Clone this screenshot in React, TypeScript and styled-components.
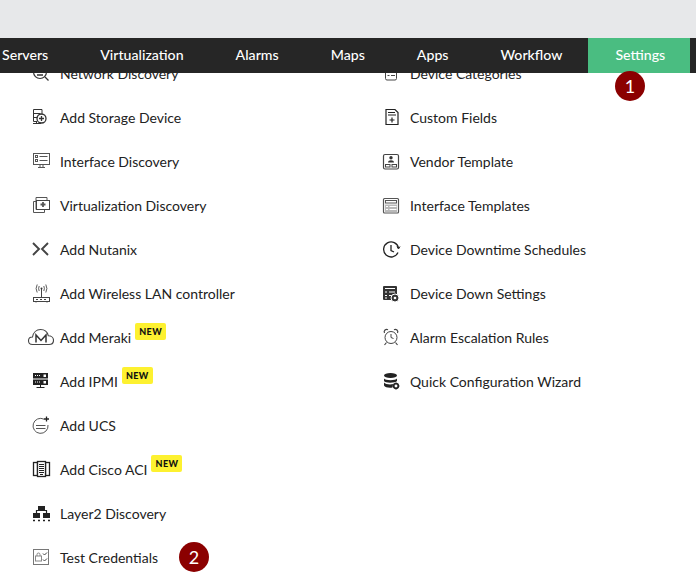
import React from "react";
import styled, { createGlobalStyle } from "styled-components";

const GlobalStyle = createGlobalStyle`
  html, body {
    margin: 0;
    padding: 0;
    background: #fff;
  }
  body {
    font-family: Lato, "Liberation Sans", sans-serif;
    font-size: 14px;
    color: #222;
  }
`;

const Page = styled.div`
  position: relative;
  width: 696px;
  height: 576px;
  overflow: hidden;
`;

const TopBand = styled.div`
  height: 38px;
  background: #e7e8ea;
`;

const NavBar = styled.nav`
  display: flex;
  position: relative;
  z-index: 1;
  height: 35px;
  background: #262626;
  overflow: hidden;
`;

const NavItem = styled.a<{ $active?: boolean; $first?: boolean }>`
  display: flex;
  align-items: center;
  flex: none;
  padding: 0 ${(p) => (p.$active ? "25px" : "26px")} 2px ${(p) => (p.$active ? "27px" : "26px")};
  margin-left: ${(p) => (p.$first ? "-24px" : "0")};
  background: ${(p) => (p.$active ? "#4abd81" : "transparent")};
  color: #fff;
  font-size: 14.15px;
  font-weight: 500;
  white-space: nowrap;
`;

const Content = styled.div`
  display: grid;
  grid-template-columns: 350px 1fr;
  padding-left: 20px;
  margin-top: -22px;
`;

const Column = styled.ul`
  list-style: none;
  margin: 0;
  padding: 0;
`;

const Row = styled.li`
  display: flex;
  align-items: center;
  height: 44px;
  white-space: nowrap;
  line-height: 17px;
`;

const IconBox = styled.span`
  display: flex;
  flex: none;
  justify-content: center;
  align-items: center;
  width: 40px;
  height: 24px;
  color: #333;

  svg {
    display: block;
  }
`;

const NewBadge = styled.span`
  position: relative;
  top: -6px;
  display: flex;
  align-items: center;
  justify-content: center;
  width: 31px;
  height: 17px;
  margin-left: 4px;
  border-radius: 2px;
  background: #fdf130;
  color: #111;
  font-size: 9px;
  font-weight: 900;
  letter-spacing: 0.4px;
`;

const Marker = styled.span`
  display: flex;
  flex: none;
  align-items: center;
  justify-content: center;
  width: 30px;
  height: 30px;
  border-radius: 50%;
  background: #8b0000;
  color: #fff;
  font-size: 18px;
`;

const SettingsMarker = styled(Marker)`
  position: absolute;
  z-index: 2;
  left: 615px;
  top: 71px;
`;

const CredentialsMarker = styled(Marker)`
  margin-left: 21px;
`;

const Glyph = ({ children }: { children: React.ReactNode }) => (
  <svg width="22" height="20" viewBox="-1 0 22 20" fill="none" stroke="currentColor" strokeWidth="1">
    {children}
  </svg>
);

const icons: Record<string, React.ReactNode> = {
  network: (
    <Glyph>
      <circle cx="10" cy="9" r="6.500" strokeWidth="1.200" />
      <circle cx="8" cy="8" r="1" />
      <circle cx="12" cy="8" r="1" />
      <path d="M7 12h6M15 14l3.500 3.500" strokeWidth="1.300" />
    </Glyph>
  ),
  storage: (
    <Glyph>
      <path d="M7 14.500H3.500v-12h8.500v5M3.500 6.500h7M3.500 10.500h4M3 16.500h8M6.500 14.500v2" />
      <circle cx="11.500" cy="11.500" r="4.500" strokeWidth="1.300" />
      <path d="M11.500 9v5M9 11.500h5" strokeWidth="1.300" />
    </Glyph>
  ),
  iface: (
    <Glyph>
      <rect x="3.500" y="2.500" width="16" height="11" stroke="#555" />
      <rect x="5.500" y="4.500" width="2" height="2" stroke="#555" />
      <rect x="5.500" y="8.500" width="2" height="2" stroke="#555" />
      <path d="M9.500 5.500h8M9.500 9.500h8M8 16.500h7M10 14v2M13 14v2" stroke="#555" />
    </Glyph>
  ),
  virtual: (
    <Glyph>
      <path d="M6 14.500V2.500h11v3M6 6.500H3.500v11h11v-3" stroke="#555" />
      <rect x="6.500" y="5.500" width="13" height="9" stroke="#444" />
      <path d="M13 7v5M10.500 9.500h5" strokeWidth="1.800" stroke="#555" />
    </Glyph>
  ),
  nutanix: (
    <Glyph>
      <path d="M3 4l6 6-6 6M18 4l-6 6 6 6" strokeWidth="1.900" stroke="#444" />
    </Glyph>
  ),
  wireless: (
    <Glyph>
      <rect x="3.500" y="14.500" width="16" height="4" stroke="#444" />
      <path d="M11.500 6v8.500M6 16.500h2M10 16.500h2M14 16.500h2M6 18.500v1M17 18.500v1" stroke="#444" />
      <circle cx="11.500" cy="5.500" r="1" fill="currentColor" stroke="none" />
      <path d="M9.200 3Q8 5.500 9.200 8M13.800 3Q15 5.500 13.800 8M7.200 1.500Q5 5.500 7.200 9.500M15.800 1.500Q18 5.500 15.800 9.500" strokeWidth="0.800" />
    </Glyph>
  ),
  meraki: (
    <svg width="27" height="20" viewBox="0 0 27 20" fill="none" stroke="#444">
      <path d="M5.500 17.500C2.500 17.500 1.500 15.500 1.500 13.700 1.500 11.500 3.300 10 5.500 10 6.200 5.500 9.500 2.500 13.500 2.500c4 0 7 2.500 7.800 6.300 3 0 5.200 2 5.200 4.500 0 2.300-1.800 4.200-4.500 4.200z" strokeWidth="1.100" />
      <path d="M9 15.500V8l5 5.500L19 8v7.500" strokeWidth="1.500" stroke="#333" />
    </svg>
  ),
  ipmi: (
    <Glyph>
      <rect x="3" y="2" width="15" height="5.500" fill="#222" stroke="none" />
      <rect x="3" y="8.500" width="15" height="5.500" fill="#222" stroke="none" />
      <path d="M5 4.500h5M5 11h5" stroke="#fff" strokeDasharray="1 1" />
      <rect x="13.500" y="3.500" width="2.500" height="2.500" fill="#fff" stroke="none" />
      <rect x="13.500" y="10" width="2.500" height="2.500" fill="#fff" stroke="none" />
      <path d="M10.500 14v3M6.500 16.500h8" stroke="#222" />
    </Glyph>
  ),
  ucs: (
    <Glyph>
      <path d="M14 4.200A7.500 7.500 0 1 0 18 10" stroke="#555" />
      <path d="M6 10.500h9.500M6 13.500h9.500" stroke="#555" />
      <path d="M16.500 1.500v5M14 4h5" strokeWidth="1.300" stroke="#222" />
    </Glyph>
  ),
  cisco: (
    <Glyph>
      <rect x="3.500" y="3.500" width="4" height="13" strokeWidth="1.300" stroke="#222" />
      <rect x="15.500" y="3.500" width="4" height="13" strokeWidth="1.300" stroke="#222" />
      <rect x="7.500" y="2.500" width="8" height="15" fill="#fff" strokeWidth="1.300" stroke="#222" />
      <path d="M9 5.500h5M9 7.500h5M9 9.500h5M9 11.500h5M9 13.500h5M10 15.500h3" stroke="#222" />
    </Glyph>
  ),
  layer2: (
    <Glyph>
      <rect x="8" y="3" width="7" height="5" fill="#222" stroke="none" />
      <rect x="3" y="10" width="7" height="5" fill="#222" stroke="none" />
      <rect x="13" y="10" width="7" height="5" fill="#222" stroke="none" />
      <path d="M6.500 10V7.500h10V10" stroke="#222" strokeWidth="1.200" />
      <path d="M3 17.500h2M8 17.500h2M13 17.500h2M18 17.500h2" stroke="#222" strokeWidth="1.500" />
    </Glyph>
  ),
  credentials: (
    <Glyph>
      <rect x="3.500" y="2.500" width="15" height="15" stroke="#777" />
      <rect x="5.500" y="9" width="6" height="5" stroke="#888" />
      <path d="M7 9V7.500a1.500 1.500 0 0 1 3 0V9" stroke="#888" />
      <path d="M13 6.500l1.500 1.500 2.500-2.500M13 12.500l1.500 1.500 2.500-2.500" stroke="#444" />
    </Glyph>
  ),
  categories: (
    <Glyph>
      <rect x="5.500" y="4.500" width="11" height="12.500" rx="1.500" stroke="#444" />
      <path d="M5.500 8.500h11M7.500 12.500h2M11 12.500h4" stroke="#444" />
    </Glyph>
  ),
  fields: (
    <Glyph>
      <path d="M6 2.500h9l3 3v12H6z" strokeWidth="1.200" stroke="#222" />
      <path d="M8 5.500h7M8 8h8" strokeWidth="1.200" stroke="#222" />
      <path d="M12 10.500v5M9.500 13h5" strokeWidth="1.200" stroke="#222" />
    </Glyph>
  ),
  vendor: (
    <Glyph>
      <rect x="3.500" y="3.500" width="15" height="14.500" rx="1.500" strokeWidth="1.200" stroke="#444" />
      <circle cx="11" cy="6.700" r="1.700" fill="#333" stroke="none" />
      <path d="M8 11.500c0-3 6-3 6 0z" fill="#333" stroke="none" />
      <rect x="5.500" y="13.500" width="4.500" height="2.500" stroke="#444" />
      <rect x="12" y="13.500" width="4.500" height="2.500" stroke="#444" />
    </Glyph>
  ),
  templates: (
    <Glyph>
      <rect x="3.500" y="3.500" width="15" height="14.500" rx="1" strokeWidth="1.200" stroke="#555" />
      <rect x="5.500" y="5.500" width="11" height="2.500" stroke="#555" />
      <path d="M5 9.500h12V17H5z" fill="#b9b9b9" stroke="none" />
      <path d="M6 11.500h2M9.500 11.500h7M6 14.500h2M9.500 14.500h7" stroke="#fff" />
    </Glyph>
  ),
  downtime: (
    <Glyph>
      <path d="M18.500 9A7.500 7.500 0 1 0 18 13.500" strokeWidth="1.300" stroke="#222" />
      <path d="M17 7.500l1.500 2.500 1.500-2.500" stroke="#222" />
      <path d="M11 6v5.500l3 1.500" strokeWidth="1.300" stroke="#222" />
    </Glyph>
  ),
  downSettings: (
    <Glyph>
      <rect x="3" y="3" width="14" height="14" fill="#333" stroke="none" rx="1" />
      <path d="M5 5.500h10M5 9h2M9 9h6M5 12.500h2M9 12.500h3M5 15h2" stroke="#fff" />
      <circle cx="15" cy="15" r="4" fill="#333" stroke="#fff" />
      <circle cx="15" cy="15" r="1.300" fill="#fff" stroke="none" />
    </Glyph>
  ),
  alarm: (
    <Glyph>
      <circle cx="11" cy="10.500" r="6" stroke="#444" />
      <path d="M11 7v3.500l2.500 1" stroke="#444" />
      <path d="M4.500 6a2.500 2.500 0 0 1 3.500-3.300M17.500 6A2.500 2.500 0 0 0 14 2.700M6.500 15.500L4.500 18M15.500 15.500l2 2.500" strokeWidth="1.200" stroke="#444" />
    </Glyph>
  ),
  wizard: (
    <Glyph>
      <ellipse cx="10.500" cy="4.500" rx="6.500" ry="2.500" fill="#222" stroke="none" />
      <path d="M4 7.500c1 2.300 12 2.300 13 0v2.500c-1 2-12 2.500-13 0zM4 11.500c1 2 7 2.300 9 1.500l-.5 3.500C9 17 5 16.500 4 14.500z" fill="#222" stroke="none" />
      <circle cx="16" cy="15" r="2.300" strokeWidth="1.700" stroke="#222" />
      <path d="M16 11.500v1M16 17.500v1M12.500 15h1M18.500 15h1" stroke="#222" />
    </Glyph>
  ),
};

type Entry = { label: string; icon: string; isNew?: boolean; marker?: string };

const leftItems: Entry[] = [
  { label: "Network Discovery", icon: "network" },
  { label: "Add Storage Device", icon: "storage" },
  { label: "Interface Discovery", icon: "iface" },
  { label: "Virtualization Discovery", icon: "virtual" },
  { label: "Add Nutanix", icon: "nutanix" },
  { label: "Add Wireless LAN controller", icon: "wireless" },
  { label: "Add Meraki", icon: "meraki", isNew: true },
  { label: "Add IPMI", icon: "ipmi", isNew: true },
  { label: "Add UCS", icon: "ucs" },
  { label: "Add Cisco ACI", icon: "cisco", isNew: true },
  { label: "Layer2 Discovery", icon: "layer2" },
  { label: "Test Credentials", icon: "credentials", marker: "2" },
];

const rightItems: Entry[] = [
  { label: "Device Categories", icon: "categories" },
  { label: "Custom Fields", icon: "fields" },
  { label: "Vendor Template", icon: "vendor" },
  { label: "Interface Templates", icon: "templates" },
  { label: "Device Downtime Schedules", icon: "downtime" },
  { label: "Device Down Settings", icon: "downSettings" },
  { label: "Alarm Escalation Rules", icon: "alarm" },
  { label: "Quick Configuration Wizard", icon: "wizard" },
];

const navItems = ["Servers", "Virtualization", "Alarms", "Maps", "Apps", "Workflow", "Settings"];

const MenuColumn = ({ items }: { items: Entry[] }) => (
  <Column>
    {items.map((item) => (
      <Row key={item.label}>
        <IconBox>{icons[item.icon]}</IconBox>
        {item.label}
        {item.isNew && <NewBadge>NEW</NewBadge>}
        {item.marker && <CredentialsMarker>{item.marker}</CredentialsMarker>}
      </Row>
    ))}
  </Column>
);

const App = () => {
  return (
    <Page>
      <GlobalStyle />
      <TopBand />
      <NavBar>
        {navItems.map((name, i) => (
          <NavItem key={name} $first={i === 0} $active={name === "Settings"}>
            {name}
          </NavItem>
        ))}
      </NavBar>
      <SettingsMarker>1</SettingsMarker>
      <Content>
        <MenuColumn items={leftItems} />
        <MenuColumn items={rightItems} />
      </Content>
    </Page>
  );
};

export default App;
